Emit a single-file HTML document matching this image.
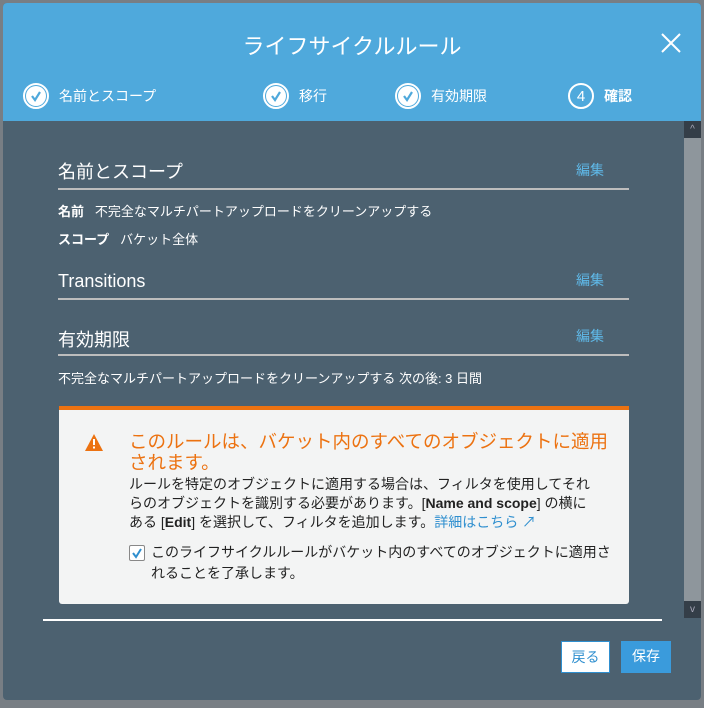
<!DOCTYPE html>
<html><head><meta charset="utf-8"><style>
*{box-sizing:border-box;margin:0;padding:0}
body{width:704px;height:708px;background:#787e84;font-family:"Liberation Sans","Noto Sans CJK JP",sans-serif;position:relative;overflow:hidden}
.dlg{position:absolute;left:3px;top:3px;width:698px;height:697px;background:#4c6170;border-radius:4px;overflow:hidden}
.hd{position:absolute;left:0;top:0;width:698px;height:118px;background:#4fa9dc}
.title{position:absolute;left:0;width:698px;top:26px;text-align:center;color:#fff;font-size:22px}
.x{position:absolute;left:656px;top:28px}
.step{position:absolute;top:80px;color:#fff;font-size:14px;display:flex;align-items:center}
.ck{width:26px;height:26px;border-radius:50%;border:2px solid #fff;display:inline-flex;align-items:center;justify-content:center;margin-right:10px}
.ck span{width:20px;height:20px;border-radius:50%;background:#fff;display:flex;align-items:center;justify-content:center}
.sb{position:absolute;left:681px;top:118px;width:17px;height:497px;background:#8e969c}
.sb .a{position:absolute;left:0;width:17px;height:17px;background:#343e48;color:#aab;font-size:10px;text-align:center;line-height:17px}
.sec{position:absolute;left:55px;width:571px;border-bottom:2px solid #bdbdbd;color:#fff;font-size:18px}
.ed{position:absolute;right:25px;bottom:8px;color:#5fb9e8;font-size:14px}
.t{position:absolute;left:55px;color:#fff;font-size:13px}
.warn{position:absolute;left:56px;top:403px;width:570px;height:198px;background:#f3f4f4;border-top:4px solid #ec7211;border-radius:0 0 3px 3px}
.wt{position:absolute;left:70px;top:21px;color:#ec7211;font-size:18.5px;line-height:21px;width:480px}
.wb{position:absolute;left:70px;top:65px;color:#222;font-size:14px;line-height:19px;width:470px}
.cb{position:absolute;left:70px;top:135px;width:16px;height:16px;border:1px solid #888;background:#fff;border-radius:2px}
.ct{position:absolute;left:92px;top:132px;color:#222;font-size:14px;line-height:21px;width:470px}
.btn{position:absolute;top:638px;height:32px;font-size:14px;line-height:30px;text-align:center}
</style></head><body>
<div class="dlg">
<div class="hd">
<div class="title">ライフサイクルルール</div>
<svg class="x" width="24" height="24" viewBox="0 0 24 24"><path d="M3 3L21 21M21 3L3 21" stroke="#fff" stroke-width="2"/></svg>
<div class="step" style="left:20px"><div class="ck"><span><svg width="14" height="14" viewBox="0 0 14 14"><path d="M3 7l3 4 5-8" stroke="#4fa9dc" stroke-width="2.2" fill="none"/></svg></span></div>名前とスコープ</div>
<div class="step" style="left:260px"><div class="ck"><span><svg width="14" height="14" viewBox="0 0 14 14"><path d="M3 7l3 4 5-8" stroke="#4fa9dc" stroke-width="2.2" fill="none"/></svg></span></div>移行</div>
<div class="step" style="left:392px"><div class="ck"><span><svg width="14" height="14" viewBox="0 0 14 14"><path d="M3 7l3 4 5-8" stroke="#4fa9dc" stroke-width="2.2" fill="none"/></svg></span></div>有効期限</div>
<div class="step" style="left:565px;font-weight:bold"><div class="ck" style="font-weight:normal;font-size:15px">4</div>確認</div>
</div>
<div class="sb"><div class="a" style="top:0">^</div><div class="a" style="bottom:0">v</div></div>
<div class="sec" style="top:155px;height:32px">名前とスコープ<span class="ed">編集</span></div>
<div class="t" style="top:198px"><b>名前</b>&nbsp;&nbsp; 不完全なマルチパートアップロードをクリーンアップする</div>
<div class="t" style="top:226px"><b>スコープ</b>&nbsp;&nbsp; バケット全体</div>
<div class="sec" style="top:268px;height:29px">Transitions<span class="ed">編集</span></div>
<div class="sec" style="top:323px;height:30px">有効期限<span class="ed">編集</span></div>
<div class="t" style="top:365px">不完全なマルチパートアップロードをクリーンアップする 次の後: 3 日間</div>
<div class="warn">
<svg style="position:absolute;left:26px;top:24px" width="18" height="17" viewBox="0 0 18 17"><path d="M9 0L18 17H0Z" fill="#ec7211"/><rect x="8" y="5" width="2" height="6" fill="#fff"/><rect x="8" y="12.5" width="2" height="2" fill="#fff"/></svg>
<div class="wt">このルールは、バケット内のすべてのオブジェクトに適用<br>されます。</div>
<div class="wb">ルールを特定のオブジェクトに適用する場合は、フィルタを使用してそれ<br>らのオブジェクトを識別する必要があります。[<b>Name and scope</b>] の横に<br>ある [<b>Edit</b>] を選択して、フィルタを追加します。<span style="color:#2f8fcf">詳細はこちら ↗</span></div>
<div class="cb"><svg width="14" height="14" viewBox="0 0 14 14"><path d="M3 7l3 4 5-8" stroke="#2f8fcf" stroke-width="2" fill="none"/></svg></div>
<div class="ct">このライフサイクルルールがバケット内のすべてのオブジェクトに適用さ<br>れることを了承します。</div>
</div>
<div style="position:absolute;left:40px;top:616px;width:619px;height:2px;background:#fff"></div>
<div class="btn" style="left:558px;width:49px;background:#fff;border:1px solid #2f8fcf;color:#2f8fcf">戻る</div>
<div class="btn" style="left:618px;width:50px;background:#3a9bdc;color:#fff">保存</div>
</div>
</body></html>
